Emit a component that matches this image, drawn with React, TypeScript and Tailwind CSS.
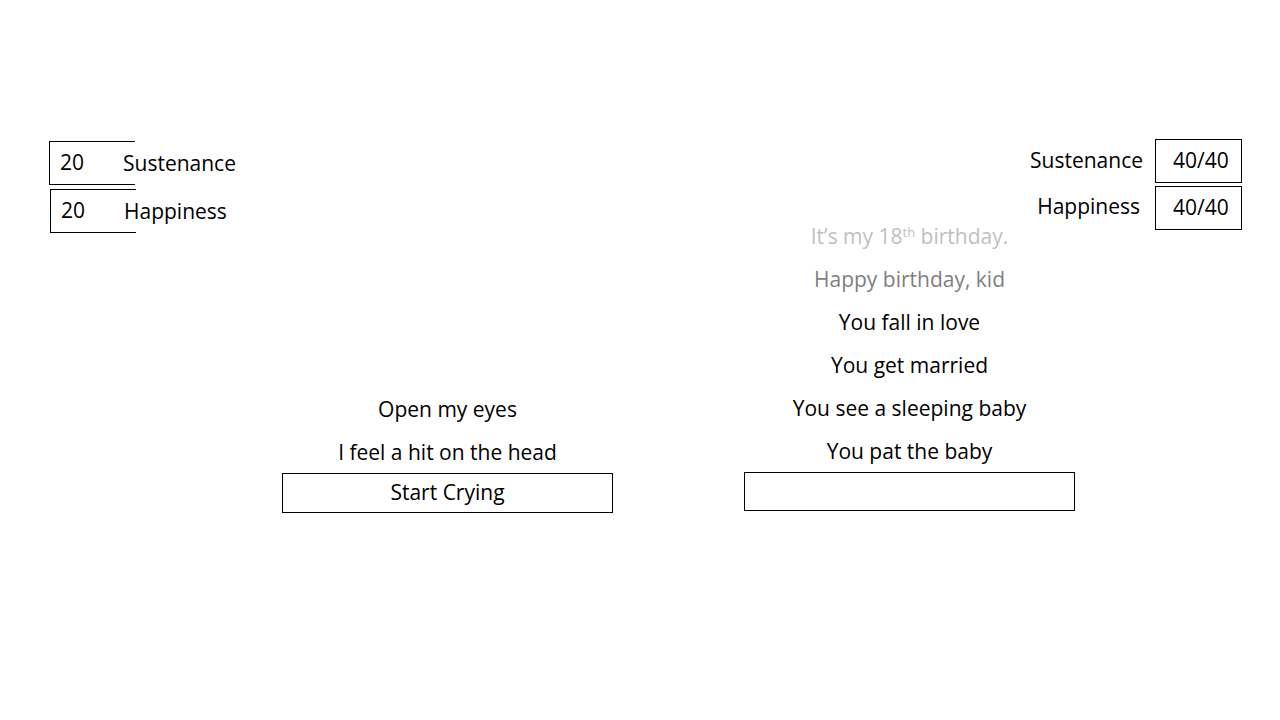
import React from "react";

const font = { fontFamily: "'Open Sans', Lato, sans-serif" };

function LeftStat({ value, label, className }: { value: string; label: string; className?: string }) {
  return (
    <div className={"flex items-center " + (className ?? "")}>
      <div className="w-[86px] h-[44px] shrink-0 border-l border-t border-b border-black flex items-center pl-[10px]">
        {value}
      </div>
      <span className="ml-[-12px] pt-[1px]">{label}</span>
    </div>
  );
}

function RightStat({ value, label, labelClass }: { value: string; label: string; labelClass?: string }) {
  return (
    <div className="flex items-center justify-end">
      <span className={"whitespace-nowrap " + (labelClass ?? "")}>{label}</span>
      <div className="w-[87px] h-[44px] shrink-0 border border-black flex items-center pl-[17px]">{value}</div>
    </div>
  );
}

function Line({ children, className }: { children: React.ReactNode; className?: string }) {
  return <div className={"h-[43px] pt-[2px] flex items-center justify-center " + (className ?? "")}>{children}</div>;
}

export default function App() {
  return (
    <div className="w-[1280px] h-[720px] bg-white text-black text-[21px] flex items-start overflow-hidden" style={font}>
      {/* left stats */}
      <div className="ml-[49px] mt-[141px] w-[233px] flex flex-col gap-[4px]">
        <LeftStat value="20" label="Sustenance" />
        <LeftStat value="20" label="Happiness" className="ml-[1px]" />
      </div>

      {/* left story column */}
      <div className="w-[331px] mt-[387px] flex flex-col">
        <Line>Open my eyes</Line>
        <Line>I feel a hit on the head</Line>
        <div className="h-[40px] border border-black flex items-center justify-center">Start Crying</div>
      </div>

      {/* right story column */}
      <div className="w-[331px] ml-[131px] mt-[214px] flex flex-col">
        <Line className="text-[#bfbfbf]">
          <span>
            It’s my 18<sup className="text-[13px]">th</sup> birthday.
          </span>
        </Line>
        <Line className="text-[#7f7f7f]">Happy birthday, kid</Line>
        <Line>You fall in love</Line>
        <Line>You get married</Line>
        <Line>You see a sleeping baby</Line>
        <Line>You pat the baby</Line>
        <div className="h-[39px] border border-black"></div>
      </div>

      {/* right stats */}
      <div className="ml-[-43px] w-[210px] mt-[139px] flex flex-col gap-[3px]">
        <RightStat value="40/40" label="Sustenance" labelClass="mr-[12px]" />
        <RightStat value="40/40" label="Happiness" labelClass="mr-[15px] mb-[2px]" />
      </div>
    </div>
  );
}
